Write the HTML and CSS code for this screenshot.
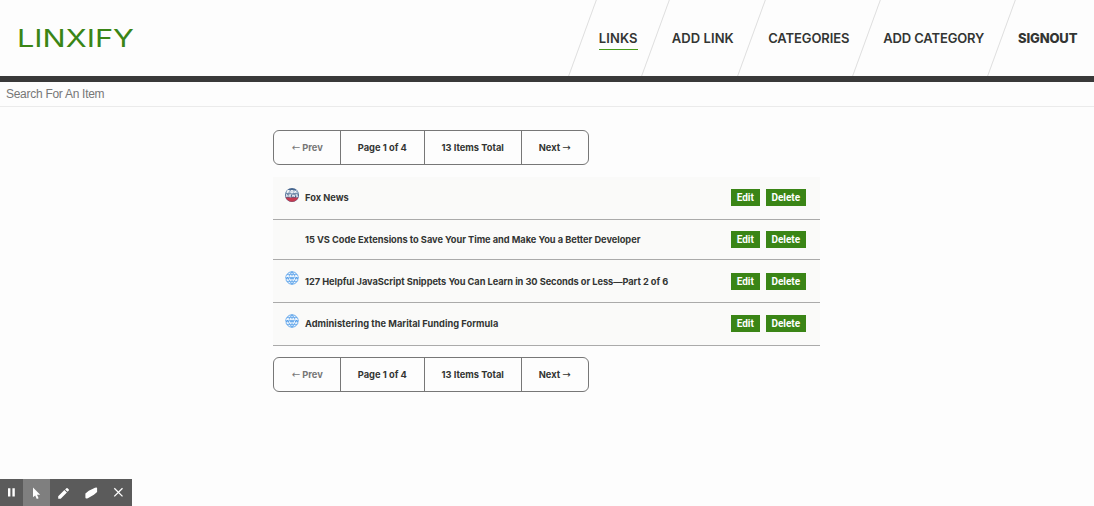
FILE: index.html
```html
<!DOCTYPE html>
<html lang="en">
<head>
<meta charset="utf-8">
<title>Linxify</title>
<link rel="stylesheet" href="styles.css">
</head>
<body>
<svg class="defs" width="0" height="0" aria-hidden="true">
  <symbol id="globe" viewBox="0 0 14 14">
    <circle cx="7" cy="7" r="6.2" fill="#f2f8fe" stroke="#5aa2ea" stroke-width="1"/>
    <path d="M7 .8v12.4M2 3.6h10M2 10.4h10M7 .8C2.9 4 2.9 10 7 13.2M7 .8c4.1 3.2 4.1 9.2 0 12.4" fill="none" stroke="#5aa2ea" stroke-width=".8"/>
    <path d="M.5 5.3h13v3.4H.5z" fill="#f2f8fe"/>
    <path d="M.8 5.8l.9 2.5.9-2.3.9 2.3.9-2.5M5 5.8l1 2.5 1-2.3 1 2.3 1-2.5M9.8 5.8l.9 2.5.9-2.3.9 2.3.7-2.5" fill="none" stroke="#4b98e8" stroke-width=".9"/>
  </symbol>
</svg>
<header class="header">
  <div class="header-bar">
    <a class="logo"><span class="logo-text">LINXIFY</span></a>
    <nav class="nav">
      <a class="nav-item links"><span class="active">LINKS</span></a>
      <a class="nav-item add-link"><span>ADD LINK</span></a>
      <a class="nav-item categories"><span>CATEGORIES</span></a>
      <a class="nav-item add-category"><span>ADD CATEGORY</span></a>
      <button class="nav-item signout"><span>SIGNOUT</span></button>
    </nav>
  </div>
  <div class="search">Search For An Item</div>
</header>
<main class="content">
  <div class="pagination">
    <a class="prev"><span class="arrow">←</span> Prev</a><p class="page">Page 1 of 4</p><p class="total">13 Items Total</p><a class="next">Next <span class="arrow">→</span></a>
  </div>
  <ul class="items">
    <li class="item">
      <svg class="icon" viewBox="0 0 14 14">
        <circle cx="7" cy="7" r="7" fill="#46668f"/>
        <path d="M.6 9.6h12.8A7 7 0 0 1 .6 9.6z" fill="#c43a50"/>
        <path d="M1.6 2.4h10.8l1.1 3H.5z" fill="#9eb3ca"/>
        <path d="M2.6 5V2.5h2M2.6 3.7h1.6M6 2.6h1.9v2.2H6zM9.2 2.5l2.2 2.5M11.4 2.5L9.2 5" fill="none" stroke="#fff" stroke-width=".9"/>
        <path d="M1.4 9V6.3l1.7 2.6V6.3M6.3 6.4H4.6v2.4h1.7M4.6 7.6h1.5M7.2 6.3l.7 2.5.8-2.1.7 2.1.7-2.5M12.6 6.4h-1.4v1.2h1.3v1.2h-1.5" fill="none" stroke="#fff" stroke-width=".8"/>
      </svg>
      <span class="title t1">Fox News</span><button class="edit">Edit</button><button class="delete">Delete</button>
    </li>
    <li class="item short">
      <span class="icon"></span>
      <span class="title t2">15 VS Code Extensions to Save Your Time and Make You a Better Developer</span><button class="edit">Edit</button><button class="delete">Delete</button>
    </li>
    <li class="item">
      <svg class="icon"><use href="#globe"/></svg>
      <span class="title t3">127 Helpful JavaScript Snippets You Can Learn in 30 Seconds or Less—Part 2 of 6</span><button class="edit">Edit</button><button class="delete">Delete</button>
    </li>
    <li class="item">
      <svg class="icon"><use href="#globe"/></svg>
      <span class="title t4">Administering the Marital Funding Formula</span><button class="edit">Edit</button><button class="delete">Delete</button>
    </li>
  </ul>
  <div class="pagination">
    <a class="prev"><span class="arrow">←</span> Prev</a><p class="page">Page 1 of 4</p><p class="total">13 Items Total</p><a class="next">Next <span class="arrow">→</span></a>
  </div>
</main>
<div class="recorder">
  <span class="tool pause"><svg viewBox="0 0 27 27"><path d="M10 9.2h2.4v8.3H10zM14.4 9.2h2.4v8.3h-2.4z"/></svg></span>
  <span class="tool selected"><svg viewBox="0 0 27 27"><path d="M10 8.5v9.8l2.2-1.9 1.6 3.7 1.8-.8-1.6-3.5h3.2z"/></svg></span>
  <span class="tool"><svg viewBox="0 0 27 27"><path d="M8.2 17.3l6.2-6.2 2.5 2.5-6.2 6.2H8.2zM15.1 10.4l1.3-1.2q.6-.5 1.2 0l1.2 1.2q.5.6 0 1.1l-1.2 1.3z"/></svg></span>
  <span class="tool"><svg viewBox="0 0 27 27"><path d="M7.4 14.4l3.4-2.6 6.2-3.1q2.1-.7 2.1.3v3.9l-3.2 2.8-6.1 3.6q-2.4.9-2.4-.7z"/></svg></span>
  <span class="tool"><svg viewBox="0 0 27 27"><path d="M9.3 9.2l8.2 8.2M17.5 9.2l-8.2 8.2" fill="none" stroke="#fff" stroke-width="1.3"/></svg></span>
</div>
</body>
</html>
```

FILE: styles.css
```css
* { box-sizing: border-box; }
body {
  margin: 0;
  min-height: 506px;
  background: #fdfdfd;
  color: #333533;
  font-family: Inter, "Liberation Sans", sans-serif;
  overflow: hidden;
}
.defs { display: block; }
button { border: 0; background: none; color: inherit; font-family: inherit; }
.header-bar {
  display: flex;
  justify-content: space-between;
  height: 82px;
  border-bottom: 6px solid #393939;
  overflow: hidden;
}
.logo { padding: 25px 0 0 16.5px; color: #3a8516; }
.logo-text {
  display: inline-block;
  font: 400 24px/28px Inter, sans-serif;
  transform: scaleX(1.28);
  transform-origin: left;
}
.nav { display: flex; }
.nav-item {
  position: relative;
  display: flex;
  padding: 30px 0 0 16.5px;
  font-size: 13px;
  font-weight: 600;
  line-height: 16px;
  white-space: nowrap;
}
.nav-item::before {
  content: "";
  position: absolute;
  left: -.5px;
  top: 0;
  width: 1.3px;
  height: 76px;
  background: #dedede;
  transform: skewX(-20deg);
}
.nav-item span { height: 20px; }
.nav-item .active { border-bottom: 1px solid #459a18; letter-spacing: .1px; }
.links { width: 73px; }
.add-link { width: 96.3px; }
.add-link span { letter-spacing: .06px; }
.categories { width: 115.2px; }
.categories span { letter-spacing: -.1px; }
.add-category { width: 134.7px; }
.add-category span { letter-spacing: -.15px; }
.signout { width: 92.5px; font-weight: 800; letter-spacing: -.15px; }
.search {
  height: 25px;
  padding-left: 6px;
  border-bottom: 1px solid #ebebeb;
  color: #777;
  font: 12px/24px "Liberation Sans", sans-serif;
  letter-spacing: -.28px;
}
.content { width: 547px; margin: 23px 0 0 273.4px; }
.pagination {
  display: inline-grid;
  grid-template-columns: 66.6px 83.7px 97px 66px;
  height: 35px;
  border: 1px solid #777;
  border-radius: 6px;
  font-size: 9.3px;
  font-weight: 650;
  line-height: 33px;
  text-align: center;
  vertical-align: top;
}
.pagination > * { margin: 0; border-right: 1px solid #777; white-space: nowrap; }
.pagination > :last-child { border: 0; }
.pagination .prev { color: #777; }
.arrow { font: 400 10px/1 "DejaVu Sans", sans-serif; }
.items { margin: 12px 0 11.5px; padding: 0; list-style: none; background: #fafaf9; }
.item {
  display: flex;
  align-items: center;
  height: 42.7px;
  padding: 0 14.6px 0 11.6px;
  border-bottom: 1px solid #aaa;
  font-size: 9.25px;
  font-weight: 650;
}
.item.short { height: 40.5px; }
.icon { width: 14px; height: 14px; margin: 0 6px 6px 0; }
.title { flex: 1; white-space: nowrap; }
.t2 { letter-spacing: -.03px; }
.t3 { letter-spacing: -.055px; }
.t4 { letter-spacing: .03px; }
.edit, .delete {
  height: 17px;
  padding: 0;
  margin-left: 6px;
  background: #3a8516;
  color: #fff;
  font: 700 10px/17px Roboto, sans-serif;
}
.edit { width: 29px; }
.delete { width: 40px; }
.recorder {
  position: fixed;
  left: 0;
  bottom: 0;
  display: flex;
  width: 132px;
  height: 27px;
  background: #5b5b5b;
}
.tool { width: 27.3px; height: 27px; }
.tool.pause { width: 23px; overflow: hidden; }
.tool svg { display: block; width: 27px; height: 27px; fill: #fff; }
.pause svg { margin-left: -2px; }
.selected { background: #7f7f7f; }
```
